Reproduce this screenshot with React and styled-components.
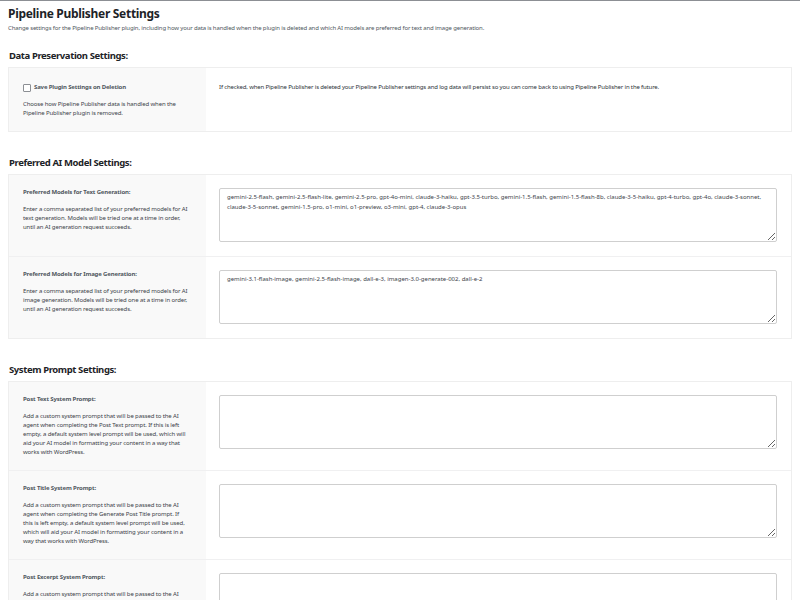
import React from 'react';
import styled, { createGlobalStyle } from 'styled-components';

const GlobalStyle = createGlobalStyle`
  html, body {
    margin: 0;
    padding: 0;
    background: #fff;
  }
  body {
    font-family: "Noto Sans", "Open Sans", sans-serif;
    color: #3c434a;
    border-top: 1px solid #8c8f94;
  }
`;

const Page = styled.div`
  padding: 0 8px 24px;
`;

const Title = styled.h1`
  margin: 0;
  padding-top: 4px;
  font-size: 12px;
  line-height: 18px;
  letter-spacing: -0.3px;
  font-weight: 700;
  color: #1d2327;
`;

const Intro = styled.p`
  margin: 1px 0 0;
  font-size: 6px;
  line-height: 9px;
  letter-spacing: -0.15px;
  color: #50575e;
`;

const SectionTitle = styled.h2`
  margin: ${(p) => (p.first ? '16px' : '24px')} 0 4px 1px;
  font-size: 9.5px;
  line-height: 14px;
  letter-spacing: -0.4px;
  font-weight: 700;
  color: #1d2327;
`;

const Card = styled.div`
  border: 1px solid #eeeeee;
  background: #fff;
`;

const Row = styled.div`
  display: flex;
  & + & {
    border-top: 1px solid #f0f0f1;
  }
`;

const Aside = styled.div`
  width: 197px;
  flex-shrink: 0;
  box-sizing: border-box;
  padding: ${(p) => (p.top ? `${p.top}px` : '13px')} 17px 13px 14px;
  background: #f9f9f9;
`;

const Main = styled.div`
  flex: 1;
  min-width: 0;
  padding: ${(p) => (p.top ? `${p.top}px` : '13px')} 14px 14px 13px;
`;

const Label = styled.div`
  display: flex;
  align-items: center;
  gap: 3px;
  font-size: 6px;
  line-height: 9px;
  letter-spacing: -0.15px;
  font-weight: 700;
  color: #50575e;
`;

const Box = styled.span`
  width: 8px;
  height: 8px;
  box-sizing: border-box;
  border: 1px solid #8c8f94;
  border-radius: 1px;
  background: #fff;
`;

const Desc = styled.p`
  margin: 8px 0 0;
  max-width: ${(p) => (p.narrow ? '160px' : 'none')};
  font-size: 6px;
  line-height: 9px;
  letter-spacing: -0.12px;
  color: #3c434a;
`;

const Note = styled.p`
  margin: 0;
  font-size: 6px;
  line-height: 9px;
  letter-spacing: -0.15px;
  color: #2c3338;
`;

const Field = styled.textarea`
  display: block;
  width: 100%;
  height: 54px;
  box-sizing: border-box;
  margin: 0;
  padding: 3px 7px;
  border: 1px solid #cfcfcf;
  border-radius: 2px;
  font-family: inherit;
  font-size: 6px;
  line-height: 10px;
  color: #3c434a;
  background: #fff;
  outline: none;
`;

const textModels =
  'gemini-2.5-flash, gemini-2.5-flash-lite, gemini-2.5-pro, gpt-4o-mini, claude-3-haiku, gpt-3.5-turbo, gemini-1.5-flash, gemini-1.5-flash-8b, claude-3-5-haiku, gpt-4-turbo, gpt-4o, claude-3-sonnet, claude-3-5-sonnet, gemini-1.5-pro, o1-mini, o1-preview, o3-mini, gpt-4, claude-3-opus';

const imageModels =
  'gemini-3.1-flash-image, gemini-2.5-flash-image, dall-e-3, imagen-3.0-generate-002, dall-e-2';

const modelRows = [
  {
    label: 'Preferred Models for Text Generation:',
    desc: 'Enter a comma separated list of your preferred models for AI text generation. Models will be tried one at a time in order, until an AI generation request succeeds.',
    value: textModels,
  },
  {
    label: 'Preferred Models for Image Generation:',
    desc: 'Enter a comma separated list of your preferred models for AI image generation. Models will be tried one at a time in order, until an AI generation request succeeds.',
    value: imageModels,
  },
];

const promptRows = [
  {
    label: 'Post Text System Prompt:',
    desc: 'Add a custom system prompt that will be passed to the AI agent when completing the Post Text prompt. If this is left empty, a default system level prompt will be used, which will aid your AI model in formatting your content in a way that works with WordPress.',
  },
  {
    label: 'Post Title System Prompt:',
    desc: 'Add a custom system prompt that will be passed to the AI agent when completing the Generate Post Title prompt. If this is left empty, a default system level prompt will be used, which will aid your AI model in formatting your content in a way that works with WordPress.',
  },
  {
    label: 'Post Excerpt System Prompt:',
    desc: 'Add a custom system prompt that will be passed to the AI agent when completing the Generate Post Excerpt prompt. If this is left empty, a default system level prompt will be used, which will aid your AI model in formatting your content in a way that works with WordPress.',
  },
];

const SettingRow = ({ item }) => (
  <Row>
    <Aside>
      <Label>{item.label}</Label>
      <Desc>{item.desc}</Desc>
    </Aside>
    <Main>
      <Field defaultValue={item.value || ''} />
    </Main>
  </Row>
);

const App = () => {
  return (
    <>
      <GlobalStyle />
      <Page>
        <Title>Pipeline Publisher Settings</Title>
        <Intro>
          Change settings for the Pipeline Publisher plugin, including how your data is handled when the plugin is deleted and which AI models are preferred for text and image generation.
        </Intro>

        <SectionTitle first>Data Preservation Settings:</SectionTitle>
        <Card>
          <Row>
            <Aside top={15}>
              <Label>
                <Box />
                Save Plugin Settings on Deletion
              </Label>
              <Desc narrow>Choose how Pipeline Publisher data is handled when the Pipeline Publisher plugin is removed.</Desc>
            </Aside>
            <Main top={15}>
              <Note>
                If checked, when Pipeline Publisher is deleted your Pipeline Publisher settings and log data will persist so you can come back to using Pipeline Publisher in the future.
              </Note>
            </Main>
          </Row>
        </Card>

        <SectionTitle>Preferred AI Model Settings:</SectionTitle>
        <Card>
          {modelRows.map((item) => (
            <SettingRow key={item.label} item={item} />
          ))}
        </Card>

        <SectionTitle>System Prompt Settings:</SectionTitle>
        <Card>
          {promptRows.map((item) => (
            <SettingRow key={item.label} item={item} />
          ))}
        </Card>
      </Page>
    </>
  );
};

export default App;
